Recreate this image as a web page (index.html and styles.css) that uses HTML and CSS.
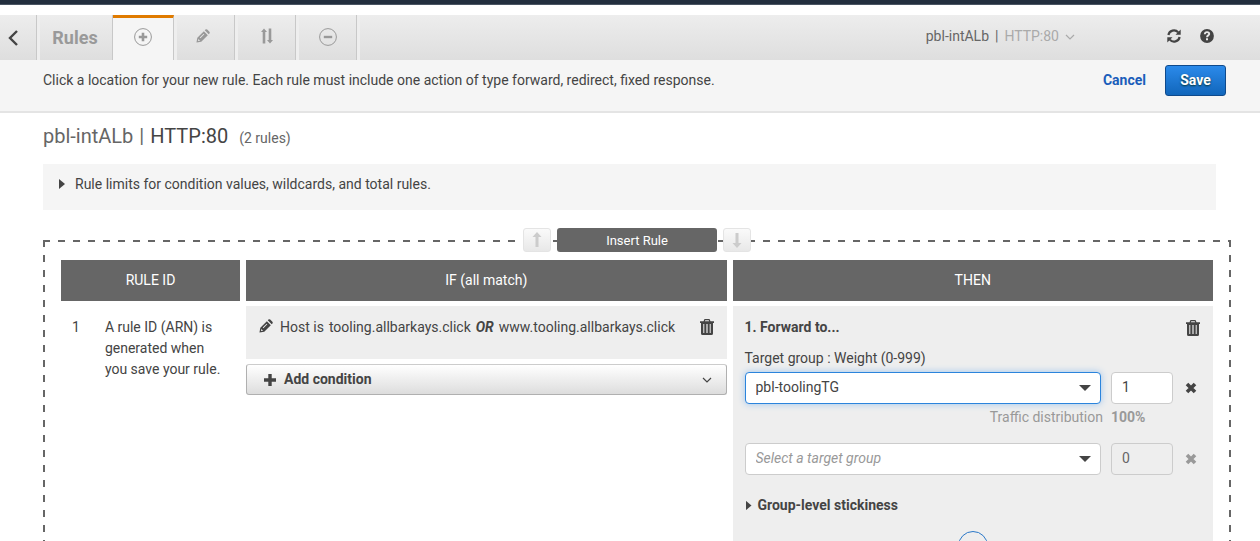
FILE: index.html
```html
<!DOCTYPE html>
<html lang="en">
<head>
<meta charset="utf-8">
<meta name="viewport" content="width=device-width, initial-scale=1">
<title>Rules</title>
<link rel="stylesheet" href="styles.css">
</head>
<body>
<svg class="defs" aria-hidden="true">
  <symbol id="pencil" viewBox="0 0 16 16"><path fill-rule="evenodd" d="M.5 15.500l1-5.500L9 2.500 13.500 7 6 14.500zM2.700 11.300l-.5 2.500 2.500-.5zM10 1.500l.8-.8a1.500 1.500 0 0 1 2 0l2.500 2.500a1.500 1.500 0 0 1 0 2l-.8.800zM4.300 9.800l.7.700 4.500-4.500-.7-.7z"/></symbol>
  <symbol id="trash" viewBox="0 0 14 16"><path fill-rule="evenodd" d="M0 2.300h3.500L4.500 0h5l1 2.300H14V4H13v10.500a1.500 1.500 0 0 1-1.500 1.500h-9A1.500 1.500 0 0 1 1 14.500V4H0zM4.800 2.300h4.400l-.5-1H5.300zM3.300 5v9h1V5zM6.400 5v9h1.200V5zM9.700 5v9h1V5z"/></symbol>
  <symbol id="cross" viewBox="0 0 12 12"><path d="M2 2l8 8M10 2l-8 8" stroke="currentColor" stroke-width="3.600"/></symbol>
  <symbol id="chevron" viewBox="0 0 10 6"><path d="M1 1l4 4 4-4" fill="none" stroke="currentColor" stroke-width="1.200"/></symbol>
  <symbol id="arrow" viewBox="0 0 10 16"><path d="M5 0l4.500 5h-3v10h-3V5h-3z"/></symbol>
</svg>
<div class="app">
  <div class="global-bar"></div>
  <header class="toolbar">
    <button class="back" type="button" aria-label="Back"><svg class="icon-back" viewBox="0 0 10 16"><path d="M9 1L2 8l7 7" fill="none" stroke="currentColor" stroke-width="2.400"/></svg></button>
    <div class="toolbar-title">Rules</div>
    <nav class="tabs" aria-label="Rule actions">
      <button class="tab tab-active" type="button" aria-label="Add rule"><svg class="icon-18" viewBox="0 0 18 18"><circle cx="9" cy="9" r="8.400" fill="none" stroke="currentColor"/><path d="M9 4.800v8.400M4.800 9h8.400" stroke="currentColor" stroke-width="2.600"/></svg></button>
      <button class="tab tab-edit" type="button" aria-label="Edit rules"><svg class="icon-14"><use href="#pencil"/></svg></button>
      <button class="tab" type="button" aria-label="Reorder rules"><svg class="icon-16" viewBox="0 0 16 16"><path d="M5 .5L8 4H6.300v11.500H3.700V4H2zM11 15.500L8 12h1.700V.5h2.600V12H14z"/></svg></button>
      <button class="tab" type="button" aria-label="Delete rules"><svg class="icon-18" viewBox="0 0 18 18"><circle cx="9" cy="9" r="8.400" fill="none" stroke="currentColor"/><path d="M4.800 9h8.400" stroke="currentColor" stroke-width="2.400"/></svg></button>
    </nav>
    <div class="toolbar-rest">
      <button class="listener" type="button">pbl-intALb<span class="divider">|</span><span class="muted">HTTP:80</span><svg class="icon-chevron muted"><use href="#chevron"/></svg></button>
      <div class="tools">
        <button class="icon-button" type="button" aria-label="Refresh"><svg class="icon-14" viewBox="0 0 14 14"><path d="M1.400 6A5.600 5.600 0 0 1 11.200 3.400M12.600 8A5.600 5.600 0 0 1 2.800 10.600" fill="none" stroke="currentColor" stroke-width="2.200"/><path d="M13.700.6v5.200H8.500zM.3 13.400V8.200h5.200z"/></svg></button>
        <button class="icon-button" type="button" aria-label="Help"><svg class="icon-14" viewBox="0 0 14 14"><circle cx="7" cy="7" r="6.900"/><path d="M4.800 5.200C4.900 3.700 5.800 3.100 7 3.100c1.300 0 2.200.8 2.200 1.900C9.200 6.400 7 6.400 7 8.300" fill="none" stroke="#e8e8e8" stroke-width="1.900"/><path d="M6 9.300h2v2H6z" fill="#e8e8e8"/></svg></button>
      </div>
    </div>
  </header>
  <div class="message">
    <p>Click a location for your new rule. Each rule must include one action of type forward, redirect, fixed response.</p>
    <div class="message-actions">
      <button class="cancel" type="button">Cancel</button>
      <button class="save" type="button">Save</button>
    </div>
  </div>
  <main>
    <h1><span class="lb-name">pbl-intALb</span><span class="divider">|</span>HTTP:80<small>(2 rules)</small></h1>
    <button class="limits" type="button"><span class="caret-right"></span>Rule limits for condition values, wildcards, and total rules.</button>
    <section class="rule">
      <div class="insert-row">
        <button class="move" type="button" aria-label="Move up"><svg class="icon-arrow"><use href="#arrow"/></svg></button>
        <button class="insert" type="button">Insert Rule</button>
        <button class="move" type="button" aria-label="Move down"><svg class="icon-arrow flip"><use href="#arrow"/></svg></button>
      </div>
      <div class="columns">
        <div class="column">
          <h2>RULE ID</h2>
          <div class="rule-id"><span>1</span><p>A rule ID (ARN) is generated when you save your rule.</p></div>
        </div>
        <div class="column">
          <h2>IF (all match)</h2>
          <div class="condition">
            <button class="icon-button" type="button" aria-label="Edit condition"><svg class="icon-14"><use href="#pencil"/></svg></button>
            <p class="condition-text"><span>Host is</span><span>tooling.allbarkays.click</span><strong>OR</strong><span>www.tooling.allbarkays.click</span></p>
            <button class="icon-button" type="button" aria-label="Delete condition"><svg class="icon-trash"><use href="#trash"/></svg></button>
          </div>
          <button class="add-condition" type="button"><svg class="icon-plus" viewBox="0 0 12 12"><path d="M6 0v12M0 6h12" stroke="currentColor" stroke-width="3.400"/></svg><span>Add condition</span><svg class="icon-chevron"><use href="#chevron"/></svg></button>
        </div>
        <div class="column">
          <h2>THEN</h2>
          <div class="action">
            <div class="action-head"><h3>1. Forward to...</h3><button class="icon-button" type="button" aria-label="Delete action"><svg class="icon-trash"><use href="#trash"/></svg></button></div>
            <label class="field-label" for="group-1">Target group : Weight (0-999)</label>
            <div class="target">
              <div class="select"><select class="select-focused" id="group-1"><option>pbl-toolingTG</option></select><span class="caret-down"></span></div>
              <input type="text" value="1" aria-label="Weight">
              <button class="icon-button" type="button" aria-label="Remove target group"><svg class="icon-cross"><use href="#cross"/></svg></button>
            </div>
            <div class="traffic"><span>Traffic distribution</span><b>100%</b></div>
            <div class="target">
              <div class="select"><select class="select-empty" aria-label="Target group"><option>Select a target group</option></select><span class="caret-down"></span></div>
              <input type="text" value="0" aria-label="Weight" disabled>
              <button class="icon-button" type="button" aria-label="Remove target group" disabled><svg class="icon-cross"><use href="#cross"/></svg></button>
            </div>
            <button class="stickiness" type="button"><span class="caret-right"></span>Group-level stickiness</button>
            <button class="confirm" type="button" aria-label="Confirm action"></button>
          </div>
        </div>
      </div>
    </section>
  </main>
</div>
</body>
</html>
```
FILE: styles.css
```css
* { box-sizing: border-box; }
body {
  margin: 0;
  background: #fff;
  color: #444;
  font: 14px/21px Roboto, "Liberation Sans", sans-serif;
}
button, input, select { font: inherit; color: inherit; }
button { padding: 0; border: 0; background: none; cursor: pointer; }
h1, h2, h3, p { margin: 0; }
svg { display: block; flex: none; fill: currentColor; }
.defs { position: absolute; width: 0; height: 0; }
.app { height: 100vh; overflow: hidden; }
.global-bar { height: 5px; border-bottom: 1px solid #4a5563; background: #232f3e; }

.toolbar {
  display: flex;
  height: 45px;
  margin-top: 10px;
  background: linear-gradient(#ededed, #dedede);
}
.back { width: 37px; padding-left: 8px; border-right: 1px solid #c8c8c8; }
.toolbar-title {
  width: 76px;
  padding-right: 2px;
  border-right: 1px solid #c8c8c8;
  border-left: 3px solid #eee;
  color: #999;
  font-size: 18px;
  font-weight: 700;
  line-height: 45px;
  text-align: center;
}
.tabs { display: flex; }
.tab {
  display: flex;
  justify-content: center;
  width: 61px;
  padding: 13px 0 0;
  border-right: 1px solid #c8c8c8;
  border-left: 3px solid #eee;
  color: #999;
}
.tab-edit { padding: 14px 5px 0 0; }
.tab-active { padding-top: 10px; border-top: 3px solid #e07b00; border-left: 0; background: #f5f5f5; }
.toolbar-rest {
  display: flex;
  flex: 1;
  justify-content: flex-end;
  align-items: flex-start;
  padding: 11px 46px 0 0;
  border-left: 3px solid #eee;
}
.listener { display: flex; align-items: center; color: #666; }
.listener .icon-chevron { margin-left: 6px; }
.divider { margin: 0 6px; color: #666; }
.muted { color: #aaa; }
.tools { display: flex; gap: 19px; margin: 3px 0 0 92px; }
.icon-button { flex: none; }
.icon-button:disabled { color: #999; }
.icon-back { width: 10px; height: 16px; }
.icon-14 { width: 14px; height: 14px; }
.icon-16 { width: 16px; height: 16px; }
.icon-18 { width: 18px; height: 18px; }
.icon-chevron { width: 10px; height: 6px; }
.icon-trash { width: 14px; height: 16px; }
.icon-cross, .icon-plus { width: 12px; height: 12px; }
.icon-arrow { width: 10px; height: 16px; }
.flip { transform: rotate(180deg); }

.message {
  display: flex;
  justify-content: space-between;
  align-items: center;
  padding: 5px 34px 15px 43px;
  border-bottom: 2px solid #e4e4e4;
  background: #f5f5f5;
}
.message-actions { display: flex; align-items: center; gap: 19px; }
.cancel { color: #1a5dba; font-weight: 700; }
.save {
  width: 61px;
  height: 31px;
  border: 1px solid #0f4a8c;
  border-radius: 3px;
  background: linear-gradient(#2b8aea, #1166bb);
  color: #fff;
  font-weight: 700;
  text-shadow: 0 1px 2px #033;
}

main { padding: 10px 29px 0 43px; }
h1 { font-size: 20px; font-weight: 400; line-height: 26px; }
.lb-name { color: #666; }
small { margin-left: 11px; color: #666; font-size: 14px; }
.limits {
  display: flex;
  align-items: center;
  width: calc(100% - 15px);
  height: 46px;
  margin-top: 15px;
  padding: 0 16px 6px;
  background: #f5f5f5;
}
h1 + .limits { margin-top: 13px; }
.caret-right { width: 6px; height: 10px; margin-right: 10px; background: #444; clip-path: polygon(0 0, 100% 50%, 0 100%); }

.rule {
  margin-top: 18px;
  padding: 0 18px 40px;
  background:
    repeating-linear-gradient(90deg, #666 0 7px, transparent 7px 15px) 0 12px / 100% 2px no-repeat,
    repeating-linear-gradient(#666 0 7px, transparent 7px 15px) 0 12px / 2px 100% no-repeat,
    repeating-linear-gradient(#666 0 7px, transparent 7px 15px) 100% 12px / 2px 100% no-repeat;
}
.insert-row { display: flex; justify-content: center; gap: 6px; }
.move {
  display: grid;
  place-items: center;
  width: 28px;
  height: 24px;
  border: 1px solid #e4e4e4;
  border-radius: 3px;
  background: linear-gradient(#fafafa, #e8e8e8);
  color: #ccc;
}
.insert { width: 160px; height: 24px; border-radius: 3px; background: #666; color: #fff; font-size: 13px; }
.columns { display: grid; grid-template-columns: 179px 1fr 1fr; gap: 6px; margin-top: 8px; }
h2 { background: #666; color: #fff; font-size: 14px; font-weight: 400; line-height: 41px; text-align: center; }
.rule-id { display: flex; gap: 25px; padding: 16px 11px; }
.condition {
  display: flex;
  align-items: flex-start;
  min-height: 53px;
  margin-top: 5px;
  padding: 13px 13px 0;
  background: #eee;
}
.condition-text { display: flex; flex: 1; flex-wrap: wrap; gap: 5px; margin: -2px 8px 0 7px; }
.condition-text strong { font-style: italic; }
.add-condition {
  display: flex;
  align-items: center;
  width: 100%;
  height: 31px;
  margin-top: 5px;
  padding: 0 14px 0 17px;
  border: 1px solid #b0b0b0;
  border-top-color: #ccc;
  border-radius: 3px;
  background: linear-gradient(#fff, #ddd);
  font-weight: 700;
}
.add-condition span { margin: 0 auto 0 8px; }

.action { margin-top: 5px; padding: 11px 12px 40px; background: #eee; }
.action-head { display: flex; justify-content: space-between; align-items: center; padding-right: 1px; }
h3 { font-size: 14px; line-height: 21px; }
.field-label { display: block; margin-top: 10px; }
.target { display: grid; grid-template-columns: 1fr 62px 14px; align-items: center; gap: 10px; margin: 3px 4px 0 0; }
.target .icon-button { justify-self: end; }
.select { display: grid; align-items: center; }
.select > * { grid-area: 1 / 1; }
select, input {
  width: 100%;
  height: 32px;
  padding: 0 10px 2px;
  border: 1px solid #ccc;
  border-radius: 4px;
  background: #fff;
  appearance: none;
}
input:disabled { background: #eee; color: #666; }
.select-focused { border-color: #2b84dc; box-shadow: 0 0 7px #9cc4ee; }
.select-empty { color: #999; font-style: italic; }
.caret-down {
  justify-self: end;
  width: 12px;
  height: 6px;
  margin-right: 10px;
  background: #444;
  clip-path: polygon(0 0, 100% 0, 50% 100%);
  pointer-events: none;
}
.traffic { display: grid; grid-template-columns: 1fr 76px; gap: 8px; margin: 3px 14px 15px 0; color: #999; }
.traffic span { text-align: right; }
.stickiness { display: flex; align-items: center; margin: 20px 0 0 1px; font-weight: 700; }
.stickiness .caret-right { margin-right: 6px; }
.confirm { display: block; width: 30px; height: 30px; margin: 15px auto 0; border: 1px solid #2b78c8; border-radius: 50%; }
```
